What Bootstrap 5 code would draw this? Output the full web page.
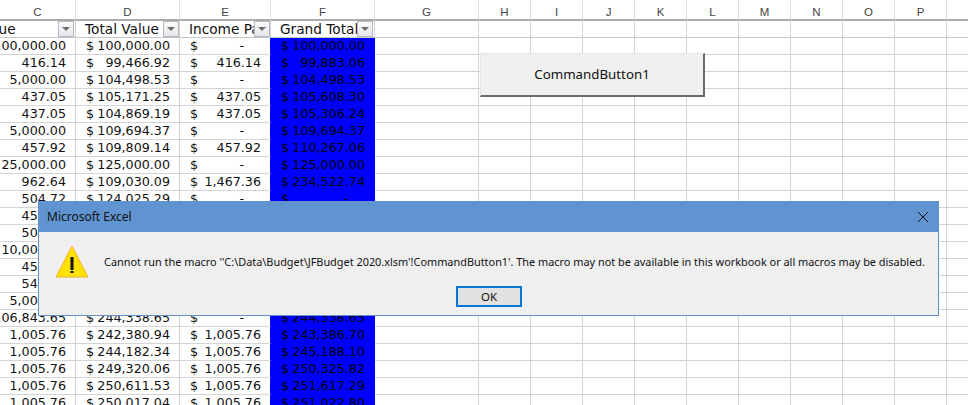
<!DOCTYPE html>
<html lang="en">
<head>
<meta charset="utf-8">
<title>Microsoft Excel</title>
<link href="https://cdn.jsdelivr.net/npm/bootstrap@5.3.0/dist/css/bootstrap.min.css" rel="stylesheet">
<style>
html,body{margin:0;width:968px;height:405px;overflow:hidden;background:#fff}
.xl-sheet{position:relative;width:968px;height:405px;overflow:hidden;font-family:"DejaVu Sans",Verdana,sans-serif;font-size:12.7px;color:#111}
.xl-table{border-collapse:separate;border-spacing:0;table-layout:fixed;width:999px}
.xl-table td,.xl-table th{padding:0;height:17px;line-height:16px;border-right:1px solid #d4d4d4;border-bottom:1px solid #d4d4d4;font-weight:400;white-space:nowrap;overflow:hidden}
.xl-table thead tr:first-child th{height:20px;padding-top:5px;border-bottom:2px solid #ababab;font-family:"Liberation Sans",Arial,sans-serif;font-size:11.5px;line-height:14px;text-align:center;color:#444;border-right-color:#dfdfdf;background:#fff}
.xl-table .xl-head td{height:16px;border-bottom:1px solid #c8c8c8}
.xl-cell{height:16px;padding:0 9px 0 10px}
.xl-dash{padding-right:17px}
.xl-tail{height:16px;padding-right:9px}
.xl-table td.xl-blue{background:#0000ff;color:#000;border-right-color:#0000ff;border-bottom-color:#0000ff}
.xl-table td.xl-edge{border-right-color:#0000ff}
.xl-hcell{height:16px;position:relative;padding-left:9px;font-size:13.7px}
.xl-hclip{padding-left:0}
.xl-hv{display:block;margin-left:-22px}
.xl-filter{position:absolute;right:0;top:0;width:16px;height:16px;border:1px solid #b4b9c4;background:linear-gradient(#fbfbfb,#e4e6ea)}
.xl-filter::after{content:"";position:absolute;left:3px;top:5px;border-left:4px solid transparent;border-right:4px solid transparent;border-top:4px solid #6e6e6e}
.xl-filter-in{right:1px}
.xl-cmd{position:absolute;left:480px;top:53px;width:225px;height:44px;border-radius:0;border:solid;border-width:1px 2px 2px 1px;border-color:#e4e4e4 #696969 #696969 #e4e4e4;background:#f0f0f0;color:#111;font-family:"Noto Sans",sans-serif;font-size:13.3px;padding:0}
.xl-dialog{position:absolute;left:38px;top:201px;width:901px;height:115px;border:1px solid #5f94d0;background:#efefef;font-family:"Noto Sans",sans-serif;color:#111}
.xl-title{height:30px;background:#5f94d0;padding:0 9px 0 8px;font-size:12px;color:#111}
.xl-body{height:54px;padding:0 0 0 16px}
.xl-icon{margin-top:5px}
.xl-msg{font-size:10.9px;white-space:nowrap;margin-left:15px;margin-top:6px}
.xl-ok{width:66px;height:21px;border-radius:0;border:2px solid #0078d7;background:#e1e1e1;color:#111;font-size:11.5px;line-height:15px;padding:0}
.xl-foot{padding-left:417px}
</style>
</head>
<body>
<div class="xl-sheet">
  <table class="xl-table">
    <colgroup>
      <col style="width:76px"><col style="width:104px"><col style="width:91px"><col style="width:104px"><col style="width:104px">
      <col style="width:52px"><col style="width:52px"><col style="width:52px"><col style="width:52px"><col style="width:52px">
      <col style="width:52px"><col style="width:52px"><col style="width:52px"><col style="width:52px"><col style="width:52px">
    </colgroup>
    <thead>
      <tr><th>C</th><th>D</th><th>E</th><th>F</th><th>G</th><th>H</th><th>I</th><th>J</th><th>K</th><th>L</th><th>M</th><th>N</th><th>O</th><th>P</th><th></th></tr>
      <tr class="xl-head">
        <td><div class="xl-hcell xl-hclip"><span class="xl-hv">Value</span><span class="xl-filter xl-filter-in"></span></div></td>
        <td><div class="xl-hcell">Total Value<span class="xl-filter"></span></div></td>
        <td><div class="xl-hcell">Income Pa<span class="xl-filter"></span></div></td>
        <td><div class="xl-hcell">Grand Total<span class="xl-filter xl-filter-in"></span></div></td>
        <td></td><td></td><td></td><td></td><td></td><td></td><td></td><td></td><td></td><td></td><td></td>
      </tr>
    </thead>
    <tbody id="xl-rows"></tbody>
  </table>

  <button type="button" class="btn xl-cmd">CommandButton1</button>

  <div class="xl-dialog d-flex flex-column" role="dialog">
    <div class="xl-title d-flex align-items-center justify-content-between">
      <span>Microsoft Excel</span>
      <svg width="12" height="12" viewBox="0 0 12 12"><path d="M1 1L11 11M11 1L1 11" stroke="#111" stroke-width="1" fill="none"/></svg>
    </div>
    <div class="xl-body d-flex align-items-center">
      <svg width="34" height="33" viewBox="0 0 34 33" class="flex-shrink-0 xl-icon"><path d="M17 1L33 32H1Z" fill="#ffe000" stroke="#f0b32a" stroke-width="1"/><rect x="15.5" y="12" width="3" height="13" fill="#111"/><rect x="15.5" y="26" width="3" height="2" fill="#111"/></svg>
      <div class="xl-msg">Cannot run the macro ''C:\Data\Budget\JFBudget 2020.xlsm'!CommandButton1'. The macro may not be available in this workbook or all macros may be disabled.</div>
    </div>
    <div class="xl-foot"><button type="button" class="btn xl-ok">OK</button></div>
  </div>
</div>
<script>
var rows=[["100,000.00","100,000.00","-","100,000.00"],["416.14","99,466.92","416.14","99,883.06"],["5,000.00","104,498.53","-","104,498.53"],["437.05","105,171.25","437.05","105,608.30"],["437.05","104,869.19","437.05","105,306.24"],["5,000.00","109,694.37","-","109,694.37"],["457.92","109,809.14","457.92","110,267.06"],["25,000.00","125,000.00","-","125,000.00"],["962.64","109,030.09","1,467.36","234,522.74"],["504.72","124,025.29","-","-"],["457.92","","",""],["504.72","","",""],["10,000.00","","",""],["457.92","","",""],["545.20","","",""],["5,000.00","","",""],["106,843.65","244,338.65","-","244,338.65"],["1,005.76","242,380.94","1,005.76","243,386.70"],["1,005.76","244,182.34","1,005.76","245,188.10"],["1,005.76","249,320.06","1,005.76","250,325.82"],["1,005.76","250,611.53","1,005.76","251,617.29"],["1,005.76","250,017.04","1,005.76","251,022.80"]];
function acc(v){return v===""?"":'<div class="xl-cell d-flex justify-content-between"><span>$</span><span'+(v==="-"?' class="xl-dash"':'')+'>'+v+'</span></div>';}
var h="";
rows.forEach(function(r){
  h+='<tr><td><div class="xl-tail d-flex justify-content-end">'+r[0]+'</div></td><td>'+acc(r[1])+'</td><td class="xl-edge">'+acc(r[2])+'</td><td class="xl-blue">'+acc(r[3])+'</td>';
  for(var i=0;i<11;i++)h+='<td></td>';
  h+='</tr>';
});
document.getElementById("xl-rows").innerHTML=h;
</script>
<script src="https://cdn.jsdelivr.net/npm/bootstrap@5.3.0/dist/js/bootstrap.bundle.min.js"></script>
</body>
</html>
